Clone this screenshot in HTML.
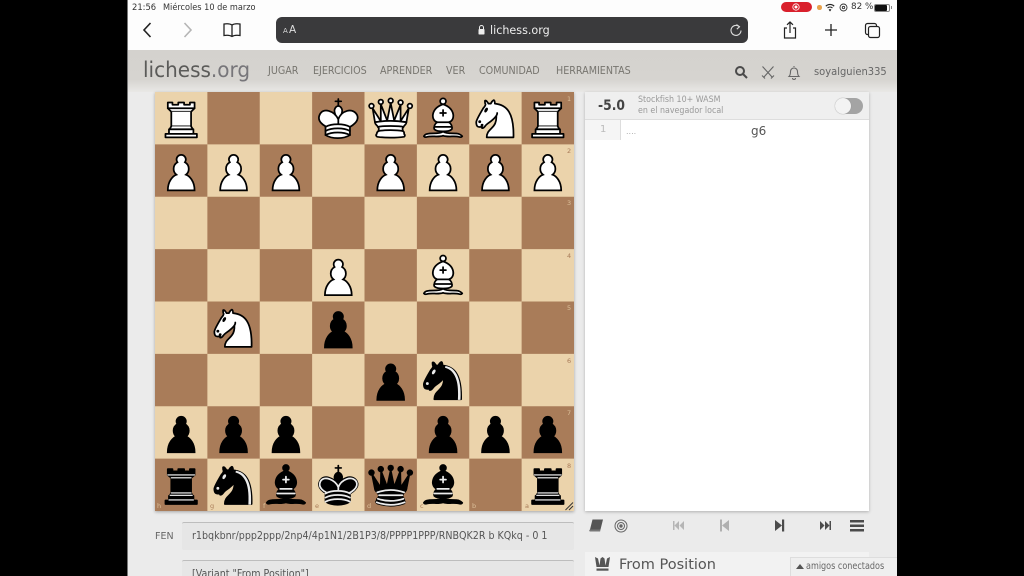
<!DOCTYPE html>
<html lang="es"><head><meta charset="utf-8"><title>lichess.org</title>
<style>
*{box-sizing:border-box}
html,body{margin:0;padding:0;width:1024px;height:576px;overflow:hidden;background:#000}
#v{position:absolute;left:127px;top:0;width:770px;height:576px;background:#ebebeb;overflow:hidden;filter:blur(.3px)}
.a{position:absolute}
.t{position:absolute;white-space:nowrap;font-family:"DejaVu Sans","Liberation Sans",sans-serif;line-height:1;transform-origin:0 50%}
.n{color:#77756f;font-size:10.2px;top:67px;transform:scaleX(.94)}
svg{position:absolute;overflow:visible}
</style></head><body>
<svg width="0" height="0" style="position:absolute"><defs>
<g id="wP"><path d="M22.5 9c-2.21 0-4 1.79-4 4 0 .89.29 1.71.78 2.38C17.33 16.5 16 18.59 16 21c0 2.03.94 3.84 2.41 5.03-3 1.06-7.41 5.55-7.41 13.47h23c0-7.92-4.41-12.41-7.41-13.47 1.47-1.19 2.41-3 2.41-5.03 0-2.41-1.33-4.5-3.28-5.62.49-.67.78-1.49.78-2.38 0-2.21-1.79-4-4-4z" fill="#fff" stroke="#000" stroke-width="1.5" stroke-linecap="round"/></g>
<g id="bP"><path d="M22.5 9c-2.21 0-4 1.79-4 4 0 .89.29 1.71.78 2.38C17.33 16.5 16 18.59 16 21c0 2.03.94 3.84 2.41 5.03-3 1.06-7.41 5.55-7.41 13.47h23c0-7.92-4.41-12.41-7.41-13.47 1.47-1.19 2.41-3 2.41-5.03 0-2.41-1.33-4.5-3.28-5.62.49-.67.78-1.49.78-2.38 0-2.21-1.79-4-4-4z" fill="#000" stroke="#000" stroke-width="1.5" stroke-linecap="round"/></g>
<g id="wR" fill="#fff" fill-rule="evenodd" stroke="#000" stroke-width="1.5" stroke-linecap="round" stroke-linejoin="round"><path d="M9 39h27v-3H9v3zM12 36v-4h21v4H12zM11 14V9h4v2h5V9h5v2h5V9h4v5" stroke-linecap="butt"/><path d="M34 14l-3 3H14l-3-3"/><path d="M31 17v12.5H14V17" stroke-linecap="butt" stroke-linejoin="miter"/><path d="M31 29.5l1.5 2.5h-20l1.5-2.5"/><path d="M11 14h23" fill="none" stroke-linejoin="miter"/></g>
<g id="bR" fill-rule="evenodd" stroke="#000" stroke-width="1.5" stroke-linecap="round" stroke-linejoin="round"><path d="M9 39h27v-3H9v3zM12.5 32l1.5-2.5h17l1.5 2.5h-20zM12 36v-4h21v4H12z" stroke-linecap="butt"/><path d="M14 29.5v-13h17v13H14z" stroke-linecap="butt" stroke-linejoin="miter"/><path d="M14 16.5L11 14h23l-3 2.5H14zM11 14V9h4v2h5V9h5v2h5V9h4v5H11z" stroke-linecap="butt"/><path d="M12 35.5h21M13 31.5h19M14 29.5h17M14 16.5h17M11 14h23" fill="none" stroke="#fff" stroke-width="1" stroke-linejoin="miter"/></g>
<g id="wN" fill="none" fill-rule="evenodd" stroke="#000" stroke-width="1.5" stroke-linecap="round" stroke-linejoin="round"><path d="M22 10c10.5 1 16.5 8 16 29H15c0-9 10-6.5 8-21" fill="#fff"/><path d="M24 18c.38 2.91-5.55 7.37-8 9-3 2-2.82 4.34-5 4-1.042-.94 1.41-3.04 0-3-1 0 .19 1.23-1 2-1 0-4.003 1-4-4 0-2 6-12 6-12s1.89-1.9 2-3.5c-.73-.994-.5-2-.5-3 1-1 3 2.5 3 2.5h2s.78-1.992 2.5-3c1 0 1 3 1 3" fill="#fff"/><path d="M9.5 25.5a.5.5 0 1 1-1 0 .5.5 0 1 1 1 0zm5.433-9.75a.5 1.5 30 1 1-.866-.5.5 1.5 30 1 1 .866.5z" fill="#000"/></g>
<g id="bN" fill="none" fill-rule="evenodd" stroke="#000" stroke-width="1.5" stroke-linecap="round" stroke-linejoin="round"><path d="M22 10c10.5 1 16.5 8 16 29H15c0-9 10-6.5 8-21" fill="#000"/><path d="M24 18c.38 2.91-5.55 7.37-8 9-3 2-2.82 4.34-5 4-1.042-.94 1.41-3.04 0-3-1 0 .19 1.23-1 2-1 0-4.003 1-4-4 0-2 6-12 6-12s1.89-1.9 2-3.5c-.73-.994-.5-2-.5-3 1-1 3 2.5 3 2.5h2s.78-1.992 2.5-3c1 0 1 3 1 3" fill="#000"/><path d="M9.5 25.5a.5.5 0 1 1-1 0 .5.5 0 1 1 1 0zm5.433-9.75a.5 1.5 30 1 1-.866-.5.5 1.5 30 1 1 .866.5z" fill="#ececec" stroke="#ececec"/><path d="M24.55 10.4l-.45 1.45.5.15c3.15 1 5.65 2.49 7.9 6.75S35.75 29.06 35.25 39l-.05.5h2.25l.05-.5c.5-10.06-.88-16.85-3.25-21.34-2.37-4.49-5.79-6.64-9.19-7.16l-.51-.1z" fill="#ececec" stroke="none"/></g>
<g id="wB" fill="none" fill-rule="evenodd" stroke="#000" stroke-width="1.5" stroke-linecap="round" stroke-linejoin="round"><g fill="#fff" stroke-linecap="butt"><path d="M9 36c3.39-.97 10.11.43 13.5-2 3.39 2.43 10.11 1.03 13.5 2 0 0 1.65.54 3 2-.68.97-1.65.99-3 .5-3.39-.97-10.11.46-13.5-1-3.39 1.46-10.11.03-13.5 1-1.354.49-2.323.47-3-.5 1.354-1.94 3-2 3-2z"/><path d="M15 32c2.5 2.5 12.5 2.5 15 0 .5-1.5 0-2 0-2 0-2.5-2.5-4-2.5-4 5.5-1.5 6-11.5-5-15.5-11 4-10.5 14-5 15.5 0 0-2.5 1.5-2.5 4 0 0-.5.5 0 2z"/><path d="M25 8a2.5 2.5 0 1 1-5 0 2.5 2.5 0 1 1 5 0z"/></g><path d="M17.5 26h10M15 30h15m-7.5-14.5v5M20 18h5" stroke-linejoin="miter"/></g>
<g id="bB" fill="none" fill-rule="evenodd" stroke="#000" stroke-width="1.5" stroke-linecap="round" stroke-linejoin="round"><g fill="#000" stroke-linecap="butt"><path d="M9 36c3.39-.97 10.11.43 13.5-2 3.39 2.43 10.11 1.03 13.5 2 0 0 1.65.54 3 2-.68.97-1.65.99-3 .5-3.39-.97-10.11.46-13.5-1-3.39 1.46-10.11.03-13.5 1-1.354.49-2.323.47-3-.5 1.354-1.94 3-2 3-2z"/><path d="M15 32c2.5 2.5 12.5 2.5 15 0 .5-1.5 0-2 0-2 0-2.5-2.5-4-2.5-4 5.5-1.5 6-11.5-5-15.5-11 4-10.5 14-5 15.5 0 0-2.5 1.5-2.5 4 0 0-.5.5 0 2z"/><path d="M25 8a2.5 2.5 0 1 1-5 0 2.5 2.5 0 1 1 5 0z"/></g><path d="M17.5 26h10M15 30h15m-7.5-14.5v5M20 18h5" stroke="#ececec" stroke-linejoin="miter"/></g>
<g id="wQ" fill="#fff" fill-rule="evenodd" stroke="#000" stroke-width="1.5" stroke-linecap="round" stroke-linejoin="round"><path d="M8 12a2 2 0 1 1-4 0 2 2 0 1 1 4 0zM24.5 7.5a2 2 0 1 1-4 0 2 2 0 1 1 4 0zM41 12a2 2 0 1 1-4 0 2 2 0 1 1 4 0zM16 8.5a2 2 0 1 1-4 0 2 2 0 1 1 4 0zM33 9a2 2 0 1 1-4 0 2 2 0 1 1 4 0z"/><path d="M9 26c8.5-1.5 21-1.5 27 0l2-12-7 11V11l-5.5 13.5-3-15-3 15-5.5-14V25L7 14l2 12z" stroke-linecap="butt"/><path d="M9 26c0 2 1.5 2 2.5 4 1 1.5 1 1 .5 3.5-1.5 1-1.5 2.5-1.5 2.5-1.5 1.5.5 2.5.5 2.5 6.5 1 16.5 1 23 0 0 0 1.5-1 0-2.5 0 0 .5-1.5-1-2.5-.5-2.5-.5-2 .5-3.5 1-2 2.5-2 2.5-4-8.5-1.5-18.5-1.5-27 0z" stroke-linecap="butt"/><path d="M11.5 30c3.5-1 18.5-1 22 0M12 33.5c6-1 15-1 21 0" fill="none"/></g>
<g id="bQ" fill-rule="evenodd" stroke="#000" stroke-width="1.5" stroke-linecap="round" stroke-linejoin="round"><g stroke="none"><circle cx="6" cy="12" r="2.75"/><circle cx="14" cy="9" r="2.75"/><circle cx="22.5" cy="8" r="2.75"/><circle cx="31" cy="9" r="2.75"/><circle cx="39" cy="12" r="2.75"/></g><path d="M9 26c8.5-1.5 21-1.5 27 0l2.5-12.5L31 25l-.3-14.1-5.2 13.6-3-14.5-3 14.5-5.2-13.6L14 25 6.5 13.5 9 26z" stroke-linecap="butt"/><path d="M9 26c0 2 1.5 2 2.5 4 1 1.5 1 1 .5 3.5-1.5 1-1.5 2.5-1.5 2.5-1.5 1.5.5 2.5.5 2.5 6.5 1 16.5 1 23 0 0 0 1.5-1 0-2.5 0 0 .5-1.5-1-2.5-.5-2.5-.5-2 .5-3.5 1-2 2.5-2 2.5-4-8.5-1.5-18.5-1.5-27 0z" stroke-linecap="butt"/><path d="M11 38.5a35 35 1 0 0 23 0" fill="none" stroke-linecap="butt"/><path d="M11 29a35 35 1 0 1 23 0M12.5 31.5h20M11.5 34.5a35 35 1 0 0 22 0M10.5 37.5a35 35 1 0 0 24 0" fill="none" stroke="#ececec"/></g>
<g id="wK" fill="none" fill-rule="evenodd" stroke="#000" stroke-width="1.5" stroke-linecap="round" stroke-linejoin="round"><path d="M22.5 11.63V6M20 8h5" stroke-linejoin="miter"/><path d="M22.5 25s4.5-7.5 3-10.5c0 0-1-2.5-3-2.5s-3 2.5-3 2.5c-1.5 3 3 10.5 3 10.5" fill="#fff" stroke-linecap="butt" stroke-linejoin="miter"/><path d="M11.5 37c5.5 3.5 15.5 3.5 21 0v-7s9-4.5 6-10.5c-4-6.5-13.5-3.5-16 4V27v-3.5c-3.5-7.5-13-10.5-16-4-3 6 5 10 5 10V37z" fill="#fff"/><path d="M11.5 30c5.5-3 15.5-3 21 0m-21 3.5c5.5-3 15.5-3 21 0m-21 3.5c5.5-3 15.5-3 21 0"/></g>
<g id="bK" fill="none" fill-rule="evenodd" stroke="#000" stroke-width="1.5" stroke-linecap="round" stroke-linejoin="round"><path d="M22.5 11.63V6" stroke-linejoin="miter"/><path d="M22.5 25s4.5-7.5 3-10.5c0 0-1-2.5-3-2.5s-3 2.5-3 2.5c-1.5 3 3 10.5 3 10.5" fill="#000" stroke-linecap="butt" stroke-linejoin="miter"/><path d="M11.5 37c5.5 3.5 15.5 3.5 21 0v-7s9-4.5 6-10.5c-4-6.5-13.5-3.5-16 4V27v-3.5c-3.5-7.5-13-10.5-16-4-3 6 5 10 5 10V37z" fill="#000"/><path d="M20 8h5" stroke-linejoin="miter"/><path d="M32 29.5s8.5-4 6.03-9.65C34.15 14 25 18 22.5 24.5l.01 2.1-.01-2.1C20 18 9.906 14 6.997 19.85c-2.497 5.65 4.853 9 4.853 9" stroke="#ececec"/><path d="M11.5 30c5.5-3 15.5-3 21 0m-21 3.5c5.5-3 15.5-3 21 0m-21 3.5c5.5-3 15.5-3 21 0" stroke="#ececec"/></g>
<pattern id="chk" width="90" height="90" patternUnits="userSpaceOnUse"><rect width="90" height="90" fill="#ebd3ab"/><rect x="45" width="45" height="45" fill="#a97c59"/><rect y="45" width="45" height="45" fill="#a97c59"/></pattern>
</defs></svg>

<div id="v">
  <div class="a" style="left:0;top:0;width:1px;height:576px;background:#777"></div>
  <!-- Browser chrome -->
  <div class="a" style="left:1px;top:0;width:769px;height:50px;background:#fdfdfd"></div>
  <div class="t" style="left:5px;top:3px;font-size:8.4px;color:#333">21:56</div>
  <div class="t" style="left:36px;top:3px;font-size:8.4px;color:#333;transform:scaleX(.975)">Miércoles 10 de marzo</div>
  <svg style="left:14px;top:20px" width="14" height="20" fill="none" stroke="#222" stroke-width="1.6"><path d="M9.500 3L3 10l6.500 7"/></svg>
  <svg style="left:54px;top:20px" width="14" height="20" fill="none" stroke="#b5b5b5" stroke-width="1.6"><path d="M3.500 3L10 10l-6.500 7"/></svg>
  <svg style="left:95px;top:21px" width="20" height="18" fill="none" stroke="#222" stroke-width="1.3"><path d="M10 4C8 2.700 5 2.500 2 3v11.500c3-.5 6-.3 8 1 2-1.300 5-1.500 8-1V3c-3-.5-6-.3-8 1zM10 4v11.500"/></svg>
  <div class="a" style="left:149px;top:17px;width:472px;height:26px;background:#3a3a3c;border-radius:6px"></div>
  <div class="t" style="left:156px;top:27.500px;font-size:7px;color:#ddd">A</div>
  <div class="t" style="left:162px;top:25px;font-size:10.500px;color:#ddd">A</div>
  <svg style="left:350px;top:24px" width="9" height="12"><path d="M2.500 5V3.500a2 2 0 0 1 4 0V5" fill="none" stroke="#eee" stroke-width="1"/><rect x="1.500" y="5" width="6" height="5.500" rx=".8" fill="#eee"/></svg>
  <div class="t" style="left:363px;top:24.500px;font-size:11.500px;color:#eee;transform:scaleX(.97)">lichess.org</div>
  <svg style="left:602px;top:23px" width="14" height="15" fill="none" stroke="#ddd" stroke-width="1.100"><path d="M10.500 3.800A5 5 0 1 0 12 7.500"/><path d="M7.500 1.500l3 2.300-2.700 2.400"/></svg>
  <svg style="left:655px;top:20px" width="16" height="20" fill="none" stroke="#222" stroke-width="1.200"><path d="M8 13V2M5 4.800L8 2l3 2.800M5 8H2.500v10h11V8H11"/></svg>
  <svg style="left:697px;top:23px" width="14" height="14" stroke="#222" stroke-width="1.300"><path d="M7 1v12M1 7h12"/></svg>
  <svg style="left:737px;top:22px" width="17" height="17" fill="none" stroke="#222" stroke-width="1.200"><rect x="4.500" y="4.500" width="11" height="11" rx="2"/><path d="M4.500 12.500h-1a2 2 0 0 1-2-2v-7a2 2 0 0 1 2-2h7a2 2 0 0 1 2 2v1"/></svg>
  <!-- status right -->
  <div class="a" style="left:654px;top:2px;width:31px;height:10px;background:#d9202c;border-radius:5px"></div>
  <svg style="left:664px;top:2px" width="10" height="10" fill="none"><circle cx="5" cy="5" r="3.200" stroke="#fff" stroke-width=".8"/><circle cx="5" cy="5" r="1.500" fill="#fff"/></svg>
  <div class="a" style="left:690px;top:5px;width:4.500px;height:4.500px;border-radius:50%;background:#e8a24c"></div>
  <svg style="left:698px;top:3px" width="10" height="9" fill="none" stroke="#222" stroke-width="1.100"><path d="M.8 3.200c2.500-2.300 5.900-2.300 8.400 0M2.500 5c1.500-1.300 3.500-1.300 5 0"/><path d="M5 8.500L3.600 6.600c.8-.6 2-.6 2.800 0z" fill="#222" stroke="none"/></svg>
  <svg style="left:712px;top:3px" width="9" height="9" fill="none" stroke="#333" stroke-width=".9"><circle cx="4.500" cy="4.500" r="3.500"/><circle cx="4.500" cy="4.500" r="1.200"/></svg>
  <div class="t" style="left:724px;top:3px;font-size:8.800px;color:#333">82 %</div>
  <div class="a" style="left:747px;top:3.500px;width:16px;height:8px;border:1px solid #888;border-radius:2px"></div>
  <div class="a" style="left:748px;top:4.500px;width:12px;height:6px;background:#111;border-radius:1px"></div>
  <div class="a" style="left:763.500px;top:6px;width:1px;height:3px;background:#888"></div>

  <!-- Site header -->
  <div class="a" style="left:1px;top:50px;width:769px;height:42px;background:linear-gradient(#d4d2ce,#d6d4d0 70%,#e9e8e6)"></div>
  <div class="t" style="left:16px;top:60px;font-size:21.500px;color:#5b5b59;transform:scaleX(.93)">lichess<span style="color:#77767a">.org</span></div>
  <div class="t n" style="left:141px">JUGAR</div>
  <div class="t n" style="left:186px">EJERCICIOS</div>
  <div class="t n" style="left:253px">APRENDER</div>
  <div class="t n" style="left:319px">VER</div>
  <div class="t n" style="left:352px">COMUNIDAD</div>
  <div class="t n" style="left:429px">HERRAMIENTAS</div>
  <svg style="left:607px;top:65px" width="14" height="14" fill="none" stroke="#4a4a4a" stroke-width="2"><circle cx="6" cy="6" r="4"/><path d="M9 9l4 4"/></svg>
  <svg style="left:634px;top:65px" width="14" height="15" fill="none" stroke="#666" stroke-width="1.100"><path d="M1.500 1.500l10 11M12.500 1.500l-10 11M1 10.500l3 3M13 10.500l-3 3"/></svg>
  <svg style="left:660px;top:65px" width="14" height="15" fill="none" stroke="#666" stroke-width="1.100"><path d="M2 11.500c1.500-1.500 1.500-3 1.500-5a3.500 3.500 0 0 1 7 0c0 2 0 3.500 1.500 5zM7 2V1M5.500 13a1.500 1.500 0 0 0 3 0"/></svg>
  <div class="t" style="left:687px;top:66.500px;font-size:10.800px;color:#666;transform:scaleX(.92)">soyalguien335</div>

  <!-- Board -->
  <svg style="left:28px;top:92px;box-shadow:0 1px 3px rgba(0,0,0,.3)" width="419" height="419" viewBox="0 0 360 360">
    <rect width="360" height="360" fill="url(#chk)"/>
    <use href="#wR" x="0" y="0"/><use href="#wK" x="135" y="0"/><use href="#wQ" x="180" y="0"/><use href="#wB" x="225" y="0"/><use href="#wN" x="270" y="0"/><use href="#wR" x="315" y="0"/>
    <use href="#wP" x="0" y="45"/><use href="#wP" x="45" y="45"/><use href="#wP" x="90" y="45"/><use href="#wP" x="180" y="45"/><use href="#wP" x="225" y="45"/><use href="#wP" x="270" y="45"/><use href="#wP" x="315" y="45"/>
    <use href="#wP" x="135" y="135"/><use href="#wB" x="225" y="135"/>
    <use href="#wN" x="45" y="180"/><use href="#bP" x="135" y="180"/>
    <use href="#bP" x="180" y="225"/><use href="#bN" x="225" y="225"/>
    <use href="#bP" x="0" y="270"/><use href="#bP" x="45" y="270"/><use href="#bP" x="90" y="270"/><use href="#bP" x="225" y="270"/><use href="#bP" x="270" y="270"/><use href="#bP" x="315" y="270"/>
    <use href="#bR" x="0" y="315"/><use href="#bN" x="45" y="315"/><use href="#bB" x="90" y="315"/><use href="#bK" x="135" y="315"/><use href="#bQ" x="180" y="315"/><use href="#bB" x="225" y="315"/><use href="#bR" x="315" y="315"/>
  </svg>
  <div class="t" style="left:440px;top:96px;font-size:6.500px;color:#dcc09a">1</div>
  <div class="t" style="left:440px;top:148px;font-size:6.500px;color:#a97c59">2</div>
  <div class="t" style="left:440px;top:200px;font-size:6.500px;color:#dcc09a">3</div>
  <div class="t" style="left:440px;top:253px;font-size:6.500px;color:#a97c59">4</div>
  <div class="t" style="left:440px;top:305px;font-size:6.500px;color:#dcc09a">5</div>
  <div class="t" style="left:440px;top:358px;font-size:6.500px;color:#a97c59">6</div>
  <div class="t" style="left:440px;top:410px;font-size:6.500px;color:#dcc09a">7</div>
  <div class="t" style="left:440px;top:463px;font-size:6.500px;color:#a97c59">8</div>
  <div class="t" style="left:30px;top:503px;font-size:6.500px;color:#dcc09a">h</div>
  <div class="t" style="left:83px;top:503px;font-size:6.500px;color:#a97c59">g</div>
  <div class="t" style="left:136px;top:503px;font-size:6.500px;color:#dcc09a">f</div>
  <div class="t" style="left:188px;top:503px;font-size:6.500px;color:#a97c59">e</div>
  <div class="t" style="left:240px;top:503px;font-size:6.500px;color:#dcc09a">d</div>
  <div class="t" style="left:293px;top:503px;font-size:6.500px;color:#a97c59">c</div>
  <div class="t" style="left:345px;top:503px;font-size:6.500px;color:#dcc09a">b</div>
  <div class="t" style="left:398px;top:503px;font-size:6.500px;color:#a97c59">a</div>
  <svg style="left:437px;top:501px" width="10" height="10" stroke="#333" stroke-width="1"><path d="M1.500 9L9 1.500M5 9L9 5"/></svg>

  <!-- FEN -->
  <div class="t" style="left:28px;top:532px;font-size:9.500px;color:#666">FEN</div>
  <div class="a" style="left:55px;top:522px;width:392px;height:28px;background:#e6e6e6;border-top:1px solid #bdbdbd;border-radius:2px"></div>
  <div class="t" style="left:65px;top:532px;font-size:10.200px;color:#555;transform:scaleX(.935)">r1bqkbnr/ppp2ppp/2np4/4p1N1/2B1P3/8/PPPP1PPP/RNBQK2R b KQkq - 0 1</div>
  <div class="a" style="left:55px;top:560px;width:392px;height:20px;background:#e6e6e6;border-top:1px solid #bdbdbd;border-radius:2px"></div>
  <div class="t" style="left:65px;top:570px;font-size:10.200px;color:#555;transform:scaleX(.935)">[Variant "From Position"]</div>

  <!-- Analysis panel -->
  <div class="a" style="left:458px;top:92px;width:284px;height:419px;background:#fff;box-shadow:0 1px 3px rgba(0,0,0,.25)"></div>
  <div class="a" style="left:458px;top:92px;width:284px;height:28px;background:#efefef;border-bottom:1px solid #ddd"></div>
  <div class="t" style="left:471px;top:99px;font-size:14.500px;font-weight:bold;color:#444;transform:scaleX(.85)">-5.0</div>
  <div class="t" style="left:511px;top:96px;font-size:8.800px;color:#999;transform:scaleX(.9)">Stockfish 10+ WASM</div>
  <div class="t" style="left:511px;top:107px;font-size:8.800px;color:#999;transform:scaleX(.9)">en el navegador local</div>
  <div class="a" style="left:708px;top:98px;width:28px;height:16px;border-radius:8px;background:#a4a4a4"></div>
  <div class="a" style="left:708px;top:98px;width:16px;height:16px;border-radius:50%;background:#f3f3f3;box-shadow:0 0 1px #888"></div>
  <div class="a" style="left:458px;top:120px;width:36px;height:20px;background:#f5f5f5;border-right:1px solid #ddd"></div>
  <div class="t" style="left:473px;top:125px;font-size:10px;color:#bbb">1</div>
  <div class="t" style="left:499px;top:128px;font-size:8px;color:#aaa">....</div>
  <div class="t" style="left:624px;top:125px;font-size:12px;color:#555">g6</div>

  <!-- Controls -->
  <svg style="left:462px;top:518px" width="15" height="15"><path d="M3.500 1.500H14l-2.500 10H1z" fill="#555"/><path d="M1 11.500h10.500l-.4 2H1.500a1 1 0 0 1-.5-2z" fill="#777"/></svg>
  <svg style="left:487px;top:519px" width="14" height="14" fill="none" stroke="#666"><circle cx="7" cy="7" r="6"/><circle cx="7" cy="7" r="3.500"/><circle cx="7" cy="7" r="1.200" fill="#666"/></svg>
  <svg style="left:545px;top:520px" width="12" height="11" fill="#b5b5b5"><path d="M1 1h1.500v9H1zM7 1v9L2.500 5.500zM12 1v9L7.500 5.500z"/></svg>
  <svg style="left:592px;top:519px" width="11" height="13" fill="#b0b0b0"><path d="M1 .5h2v12H1zM10 1v11L3 6.500z"/></svg>
  <svg style="left:647px;top:519px" width="11" height="13" fill="#4b4b4b"><path d="M8 .5h2.200v12H8zM1 1v11l7-5.500z"/></svg>
  <svg style="left:693px;top:520px" width="12" height="11" fill="#4b4b4b"><path d="M0 1v9l4.500-4.500zM5 1v9l4.500-4.500zM9.500 1H11v9H9.500z"/></svg>
  <svg style="left:723px;top:520px" width="14" height="12" fill="#4b4b4b"><rect x="0" y="0" width="14" height="2.500"/><rect x="0" y="4.500" width="14" height="2.500"/><rect x="0" y="9" width="14" height="2.500"/></svg>

  <!-- From position -->
  <div class="a" style="left:458px;top:552px;width:284px;height:24px;background:#f2f2f2"></div>
  <svg style="left:468px;top:556px" width="15" height="16" fill="#555"><path d="M0 1l3 1.500 1.500 7 1-7L7.500 1l2 1.500 1 7 1.500-7L15 1l-1.500 10h-12z"/><rect x="1.500" y="12.500" width="12" height="2.200"/></svg>
  <div class="t" style="left:492px;top:558px;font-size:14.500px;color:#555;transform:scaleX(1)">From Position</div>
  <div class="a" style="left:663px;top:557px;width:107px;height:19px;background:#efefef;border:1px solid #ddd;border-right:0;border-bottom:0"></div>
  <svg style="left:669px;top:564px" width="8" height="5" fill="#555"><path d="M0 5l4-5 4 5z"/></svg>
  <div class="t" style="left:679px;top:562px;font-size:9.500px;color:#666;transform:scaleX(.85)">amigos conectados</div>
</div>
</body></html>
